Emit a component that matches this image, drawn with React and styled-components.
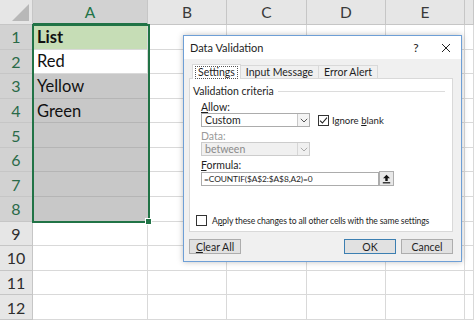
import React from 'react';
import styled, { createGlobalStyle, css } from 'styled-components';

const GlobalStyle = createGlobalStyle`
  html, body {
    margin: 0;
    padding: 0;
    background: #ffffff;
    overflow: hidden;
  }
  * {
    box-sizing: border-box;
  }
`;

const ROW_H = 24.58;
const GREEN = '#217346';

const Sheet = styled.div`
  position: relative;
  width: 474px;
  height: 324px;
  overflow: hidden;
  font-family: Lato, 'Liberation Sans', sans-serif;
`;

const Grid = styled.div`
  display: grid;
  grid-template-columns: 33px 115px 79px 80px 79px 79px 1fr;
  grid-template-rows: 25px;
  grid-auto-rows: ${ROW_H}px;
`;

const Corner = styled.div`
  position: relative;
  background: #e6e6e6;
  border-right: 1px solid #c6c6c6;
  border-bottom: 1px solid #c6c6c6;

  &::after {
    content: '';
    position: absolute;
    right: 3px;
    bottom: 3px;
    width: 17px;
    height: 17px;
    background: #b8b8b8;
    clip-path: polygon(100% 0, 100% 100%, 0 100%);
  }
`;

const ColHeader = styled.div`
  display: flex;
  align-items: center;
  justify-content: center;
  font-size: 15.5px;
  background: ${props => (props.selected ? '#d2d2d2' : '#e6e6e6')};
  color: ${props => (props.selected ? GREEN : '#3a3a3a')};
  border-right: 1px solid #c6c6c6;
  border-bottom: ${props =>
    props.selected ? `2px solid ${GREEN}` : '1px solid #c6c6c6'};
`;

const RowHeader = styled.div`
  display: flex;
  align-items: center;
  justify-content: center;
  font-size: 16px;
  background: ${props => (props.selected ? '#d2d2d2' : '#e6e6e6')};
  color: ${props => (props.selected ? '#2a6a48' : '#2e2e2e')};
  border-right: 1px solid #c6c6c6;
  border-bottom: 1px solid #c6c6c6;
`;

const cellFills = {
  plain: '#ffffff',
  title: '#c6ddb6',
  active: '#ffffff',
  selected: '#c8c8c8',
};

const Cell = styled.div`
  display: flex;
  align-items: center;
  padding-left: 4px;
  font-size: 16.5px;
  color: #111;
  background: ${props => cellFills[props.variant || 'plain']};
  border-right: 1px solid #d9d9d9;
  border-bottom: 1px solid #d9d9d9;
  ${props =>
    props.variant === 'title' &&
    css`
      font-weight: 700;
    `}
  ${props =>
    props.variant === 'selected' &&
    css`
      border-right-color: #c8c8c8;
      border-bottom-color: #b5b5b5;
    `}
`;

const Selection = styled.div`
  position: absolute;
  left: 32px;
  top: 24px;
  width: 118px;
  height: ${8 * ROW_H + 2}px;
  border: 2px solid ${GREEN};
  pointer-events: none;

  &::after {
    content: '';
    position: absolute;
    right: -4px;
    bottom: -4px;
    width: 5px;
    height: 5px;
    background: ${GREEN};
    border: 1px solid #fff;
  }
`;

/* ---------- dialog ---------- */

const Dialog = styled.div`
  position: absolute;
  left: 183px;
  top: 35px;
  width: 279px;
  height: 227px;
  display: flex;
  flex-direction: column;
  background: #f0f0f0;
  border: 1px solid #6e9fd6;
  box-shadow: 0 0 6px rgba(0, 0, 0, 0.25);
  font-family: Lato, 'Liberation Sans', sans-serif;
  font-size: 10.5px;
  color: #1e1e1e;
`;

const TitleBar = styled.div`
  display: flex;
  align-items: center;
  height: 24px;
  padding-left: 6px;
  background: #ffffff;
  font-size: 11px;
`;

const Title = styled.div`
  flex: 1;
`;

const TitleButton = styled.div`
  width: 30px;
  display: flex;
  align-items: center;
  justify-content: center;
  font-size: 12px;
  color: #222;
`;

const Body = styled.div`
  flex: 1;
  display: flex;
  flex-direction: column;
  padding: 5px 8px 7px 5px;
`;

const Tabs = styled.div`
  display: flex;
  align-items: flex-end;
  height: 14px;
  padding-left: 3px;
`;

const Tab = styled.div`
  height: ${props => (props.active ? '15px' : '13px')};
  padding: 0 ${props => (props.active ? '2px' : '5px')};
  display: flex;
  align-items: center;
  background: ${props => (props.active ? '#ffffff' : '#f0f0f0')};
  border: 1px solid #d9d9d9;
  border-bottom: none;
  margin-left: ${props => (props.active ? '0' : '-1px')};
  position: relative;
  z-index: ${props => (props.active ? 1 : 0)};
  margin-bottom: ${props => (props.active ? '-1px' : '0')};
`;

const FocusBox = styled.span`
  padding: 0 2px;
  border: 1px dotted #555;
  line-height: 11px;
`;

const Panel = styled.div`
  height: 154px;
  background: #ffffff;
  border: 1px solid #d9d9d9;
  padding: 4px 7px 0 3px;
  display: flex;
  flex-direction: column;
`;

const GroupLabel = styled.div`
  display: flex;
  align-items: center;
  gap: 4px;
  height: 16px;

  &::after {
    content: '';
    flex: 1;
    height: 1px;
    background: #dcdcdc;
  }
`;

const Fields = styled.div`
  display: flex;
  flex-direction: column;
  padding-left: 8px;
`;

const FieldLabel = styled.div`
  height: 13px;
  margin-top: ${props => props.gap || 0}px;
  display: flex;
  align-items: center;
  color: ${props => (props.disabled ? '#9a9a9a' : '#1e1e1e')};
`;

const Row = styled.div`
  display: flex;
  align-items: center;
  gap: 8px;
`;

const Select = styled.div`
  width: 109px;
  height: 14px;
  display: flex;
  border: 1px solid ${props => (props.disabled ? '#cccccc' : '#acacac')};
  background: ${props => (props.disabled ? '#f0f0f0' : '#ffffff')};
  color: ${props => (props.disabled ? '#8a8a8a' : '#1e1e1e')};
`;

const SelectText = styled.div`
  flex: 1;
  display: flex;
  align-items: center;
  padding-left: 3px;
`;

const SelectArrow = styled.div`
  width: 12px;
  display: flex;
  align-items: center;
  justify-content: center;
  border-left: 1px solid ${props => (props.disabled ? '#d6d6d6' : '#c8c8c8')};
  background: ${props => (props.disabled ? '#f0f0f0' : '#f4f4f4')};
`;

const Check = styled.label`
  display: flex;
  align-items: center;
  gap: ${props => (props.wide ? 5 : 3)}px;
  white-space: nowrap;
  font-size: ${props => props.size || 10.5}px;
  letter-spacing: ${props => props.tight || 0}px;
`;

const Box = styled.span`
  flex: none;
  width: 11px;
  height: 11px;
  display: flex;
  align-items: center;
  justify-content: center;
  background: #ffffff;
  border: 1px solid #333;
`;

const FormulaRow = styled.div`
  display: flex;
  align-items: center;
`;

const FormulaInput = styled.div`
  width: 178px;
  height: 14px;
  display: flex;
  align-items: center;
  padding-left: 2px;
  border: 1px solid #acacac;
  background: #ffffff;
  font-size: 8.4px;
  letter-spacing: -0.1px;
`;

const RefButton = styled.div`
  width: 15px;
  height: 15px;
  display: flex;
  align-items: center;
  justify-content: center;
  background: #e8e8e8;
  border: 1px solid #adadad;
`;

const ApplyRow = styled.div`
  margin-top: auto;
  margin-bottom: 5px;
  padding-left: 3px;
`;

const Footer = styled.div`
  display: flex;
  align-items: center;
  gap: 5px;
  margin-top: 7px;
`;

const Button = styled.div`
  width: 52px;
  height: 15px;
  display: flex;
  align-items: center;
  justify-content: center;
  background: #e1e1e1;
  border: 1px solid ${props => (props.primary ? '#3c7fb1' : '#adadad')};
  ${props =>
    props.push &&
    css`
      margin-left: auto;
    `}
`;

const Chevron = ({ color = '#555' }) => (
  <svg width="8" height="5" viewBox="0 0 8 5">
    <path d="M0.8 0.8 L4 4 L7.2 0.8" fill="none" stroke={color} strokeWidth="1" />
  </svg>
);

const Tick = () => (
  <svg width="9" height="9" viewBox="0 0 9 9">
    <path d="M1 4.6 L3.4 7 L8 1.6" fill="none" stroke="#222" strokeWidth="1.1" />
  </svg>
);

const RefIcon = () => (
  <svg width="9" height="10" viewBox="0 0 9 10">
    <path d="M4.5 0.8 L8 4.3 H5.7 V7 H3.3 V4.3 H1 Z" fill="#111" />
    <rect x="0.8" y="8.2" width="7.4" height="1.2" fill="#111" />
  </svg>
);

const Close = () => (
  <svg width="10" height="10" viewBox="0 0 10 10">
    <path d="M1 1 L9 9 M9 1 L1 9" stroke="#222" strokeWidth="1" />
  </svg>
);

const columns = ['A', 'B', 'C', 'D', 'E'];
const values = ['List', 'Red', 'Yellow', 'Green'];

const variantFor = row => {
  if (row === 1) return 'title';
  if (row === 2) return 'active';
  if (row <= 8) return 'selected';
  return 'plain';
};

const App = () => {
  const rows = Array.from({ length: 12 }, (_, i) => i + 1);

  return (
    <Sheet>
      <GlobalStyle />
      <Grid>
        <Corner />
        {columns.map(col => (
          <ColHeader key={col} selected={col === 'A'}>
            {col}
          </ColHeader>
        ))}
        <ColHeader />
        {rows.map(row => (
          <React.Fragment key={row}>
            <RowHeader selected={row <= 8}>{row}</RowHeader>
            <Cell variant={variantFor(row)}>{values[row - 1] || ''}</Cell>
            {columns.slice(1).map(col => (
              <Cell key={col} />
            ))}
            <Cell />
          </React.Fragment>
        ))}
      </Grid>
      <Selection />

      <Dialog>
        <TitleBar>
          <Title>Data Validation</Title>
          <TitleButton>?</TitleButton>
          <TitleButton>
            <Close />
          </TitleButton>
        </TitleBar>
        <Body>
          <Tabs>
            <Tab active>
              <FocusBox>Settings</FocusBox>
            </Tab>
            <Tab>Input Message</Tab>
            <Tab>Error Alert</Tab>
          </Tabs>
          <Panel>
            <GroupLabel>Validation criteria</GroupLabel>
            <Fields>
              <FieldLabel gap={1}>
                <span>
                  <u>A</u>llow:
                </span>
              </FieldLabel>
              <Row>
                <Select>
                  <SelectText>Custom</SelectText>
                  <SelectArrow>
                    <Chevron />
                  </SelectArrow>
                </Select>
                <Check size={9.6}>
                  <Box>
                    <Tick />
                  </Box>
                  <span>
                    Ignore <u>b</u>lank
                  </span>
                </Check>
              </Row>
              <FieldLabel gap={2} disabled>
                Data:
              </FieldLabel>
              <Select disabled>
                <SelectText>between</SelectText>
                <SelectArrow disabled>
                  <Chevron color="#aaa" />
                </SelectArrow>
              </Select>
              <FieldLabel gap={2}>
                <span>
                  <u>F</u>ormula:
                </span>
              </FieldLabel>
              <FormulaRow>
                <FormulaInput>=COUNTIF($A$2:$A$8,A2)=0</FormulaInput>
                <RefButton>
                  <RefIcon />
                </RefButton>
              </FormulaRow>
            </Fields>
            <ApplyRow>
              <Check wide size={8.6} tight={-0.14}>
                <Box />
                <span>
                  A<u>p</u>ply these changes to all other cells with the same settings
                </span>
              </Check>
            </ApplyRow>
          </Panel>
          <Footer>
            <Button>
              <span>
                <u>C</u>lear All
              </span>
            </Button>
            <Button primary push>
              OK
            </Button>
            <Button>Cancel</Button>
          </Footer>
        </Body>
      </Dialog>
    </Sheet>
  );
};

export default App;
